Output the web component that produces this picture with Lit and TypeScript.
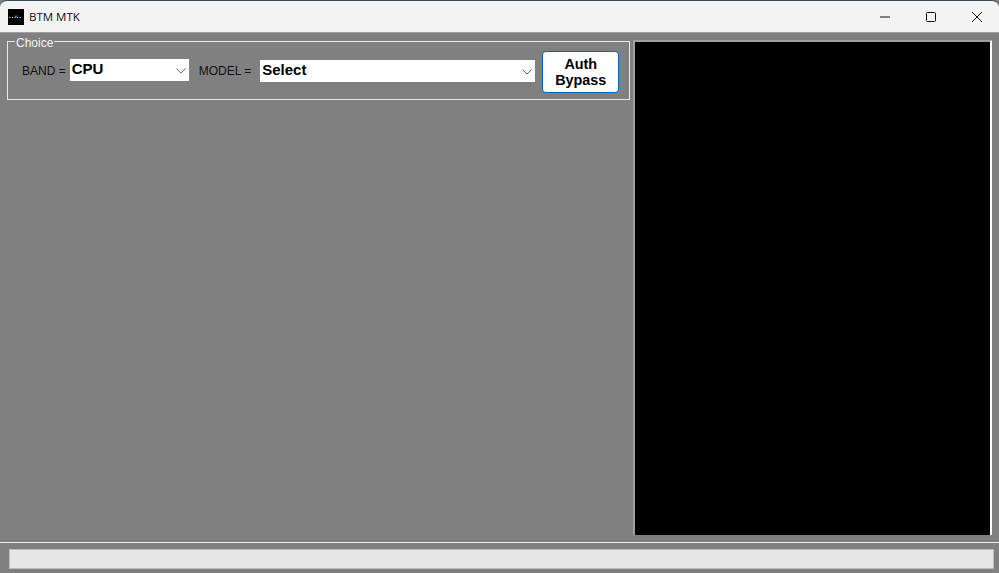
import { LitElement, html, css } from "lit";
import { customElement } from "lit/decorators.js";

const chevron = html`<svg class="chev" width="10" height="6" viewBox="0 0 10 6"><path d="M.5.5 5 5 9.500.5" fill="none" stroke="#606060" stroke-width="1"/></svg>`;

@customElement("app-root")
export class AppRoot extends LitElement {
  static styles = css`
    :host { display: block; width: 999px; height: 573px; font-family: "Liberation Sans", Arial, sans-serif; background: #808080; overflow: hidden; }
    .win { height: 573px; display: flex; flex-direction: column; background: #808080; }
    .title { height: 32px; flex: none; box-sizing: border-box; background: #f3f3f3; border-top: 1px solid #3d4a57; border-radius: 7px 7px 0 0; display: flex; align-items: center; padding-left: 8px; font-size: 11.5px; color: #111; font-family: "Open Sans", "Noto Sans", sans-serif; box-shadow: 0 1px 0 #a0a0a0; }
    .logo { width: 16px; height: 16px; background: #000; margin-right: 5px; display: flex; align-items: center; justify-content: center; }
    .name { flex: 1; }
    .ctl { width: 46px; height: 30px; display: flex; align-items: center; justify-content: center; position: relative; left: 1px; }
    .body { flex: 1; display: flex; align-items: flex-start; padding: 8px 7px 0 7px; gap: 3px; min-height: 0; }
    fieldset { margin: 1px 0 0; width: 623px; height: 59px; box-sizing: border-box; border: 1px solid #e9e9e9; padding: 0 10px 0 14px; display: flex; align-items: center; position: relative; }
    legend { position: absolute; top: -5px; left: 7px; background: #808080; color: #f5f5f5; font-size: 12px; line-height: 12px; padding: 0 1px; }
    .row { display: flex; align-items: center; width: 100%; height: 100%; }
    .lab { font-size: 12px; color: #111; white-space: nowrap; }
    .combo { background: #fff; height: 22px; box-sizing: border-box; display: flex; align-items: center; padding: 0 2px 3px; font-weight: bold; font-size: 15px; color: #000; position: relative; }
    .chev { position: absolute; right: 3px; top: 9px; }
    .band { width: 119px; margin-left: 4px; margin-top: -1px; }
    .model { width: 275px; margin-left: 9px; margin-top: 1px; }
    .mlab { margin-left: 10px; }
    button { width: 77px; height: 42px; margin-left: 7px; margin-top: 3px; background: #fff; border: 1px solid #0067c0; border-radius: 4px; font: bold 14.4px/16px "Liberation Sans", Arial, sans-serif; color: #000; padding: 0; }
    .screen { width: 359px; height: 495px; box-sizing: border-box; background: #000; border-style: solid; border-width: 2px 2px 0 2px; border-color: #a0a0a0 #fff #a0a0a0 #a0a0a0; flex: none; }
    .foot { flex: none; height: 31px; border-top: 1px solid #ececec; box-sizing: border-box; padding: 6px 5px 4px 9px; }
    .bar { height: 20px; box-sizing: border-box; background: #e6e6e6; border: 1px solid #bcbcbc; }
  `;
  render() {
    return html`<div class="win">
      <div class="title">
        <div class="logo"><svg width="16" height="16" viewBox="0 0 16 16"><path d="M1.500 8.500h11" stroke="#fff" stroke-width="1" stroke-dasharray="1 1.500"/><rect x="7" y="6.500" width="2" height="1.500" fill="#2a8cff"/></svg></div>
        <span class="name">BTM MTK</span>
        <div class="ctl"><svg width="10" height="10" viewBox="0 0 10 10"><path d="M0 5h10" stroke="#111"/></svg></div>
        <div class="ctl"><svg width="10" height="10" viewBox="0 0 10 10"><rect x=".5" y=".5" width="9" height="9" rx="1" fill="none" stroke="#111"/></svg></div>
        <div class="ctl"><svg width="10" height="10" viewBox="0 0 10 10"><path d="M0 0l10 10M10 0 0 10" stroke="#111"/></svg></div>
      </div>
      <div class="body">
        <fieldset>
          <legend>Choice</legend>
          <div class="row">
            <span class="lab">BAND =</span>
            <div class="combo band">CPU${chevron}</div>
            <span class="lab mlab">MODEL =</span>
            <div class="combo model">Select${chevron}</div>
            <button>Auth<br />Bypass</button>
          </div>
        </fieldset>
        <div class="screen"></div>
      </div>
      <div class="foot"><div class="bar"></div></div>
    </div>`;
  }
}
